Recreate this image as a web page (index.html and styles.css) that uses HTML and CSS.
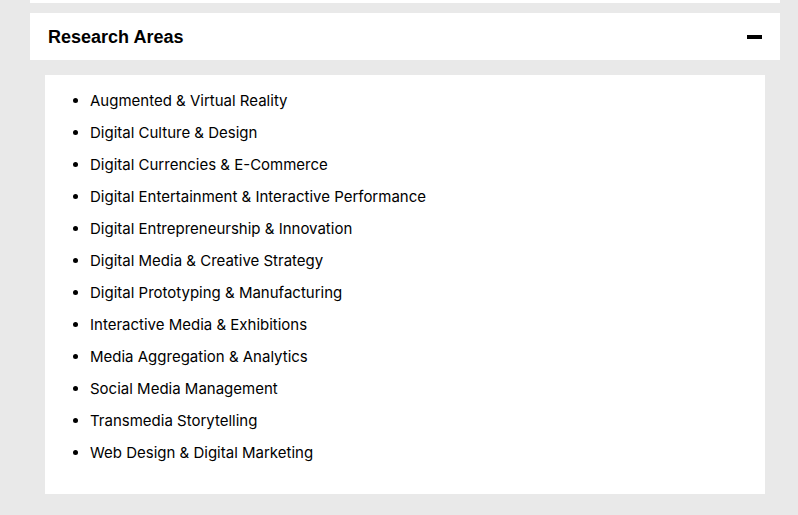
FILE: index.html
```html
<!DOCTYPE html>
<html>
<head>
<meta charset="utf-8">
<link rel="stylesheet" href="styles.css">
</head>
<body>
<div class="wrap">
  <div class="topbar"></div>
  <div class="accordion-header">
    <h2 class="title">Research Areas</h2>
    <span class="toggle"></span>
  </div>
  <div class="panel">
    <ul class="areas">
      <li>Augmented &amp; Virtual Reality</li>
      <li>Digital Culture &amp; Design</li>
      <li>Digital Currencies &amp; E-Commerce</li>
      <li>Digital Entertainment &amp; Interactive Performance</li>
      <li>Digital Entrepreneurship &amp; Innovation</li>
      <li>Digital Media &amp; Creative Strategy</li>
      <li>Digital Prototyping &amp; Manufacturing</li>
      <li>Interactive Media &amp; Exhibitions</li>
      <li>Media Aggregation &amp; Analytics</li>
      <li>Social Media Management</li>
      <li>Transmedia Storytelling</li>
      <li>Web Design &amp; Digital Marketing</li>
    </ul>
  </div>
</div>
</body>
</html>
```
FILE: styles.css
```css
html, body {
  margin: 0;
  padding: 0;
  background: #e9e9e9;
  font-family: "Liberation Sans", Arial, sans-serif;
  color: #000;
}
.wrap {
  width: 750px;
  margin-left: 30px;
}
.topbar {
  height: 3px;
  background: #fff;
  margin-bottom: 10px;
}
.accordion-header {
  height: 47px;
  box-sizing: border-box;
  padding: 1px 18px 0 18px;
  background: #fff;
  display: flex;
  align-items: center;
  justify-content: space-between;
}
.title {
  margin: 0;
  font-size: 18px;
  font-weight: bold;
}
.toggle {
  width: 15px;
  height: 4px;
  background: #000;
}
.panel {
  background: #fff;
  margin: 15px 15px 0 15px;
  padding: 10px 0 25px 0;
}
.areas {
  margin: 0;
  padding: 0 0 0 45px;
  font-family: "Inter", "Liberation Sans", sans-serif;
}
.areas li {
  font-size: 15px;
  line-height: 32px;
}
```
